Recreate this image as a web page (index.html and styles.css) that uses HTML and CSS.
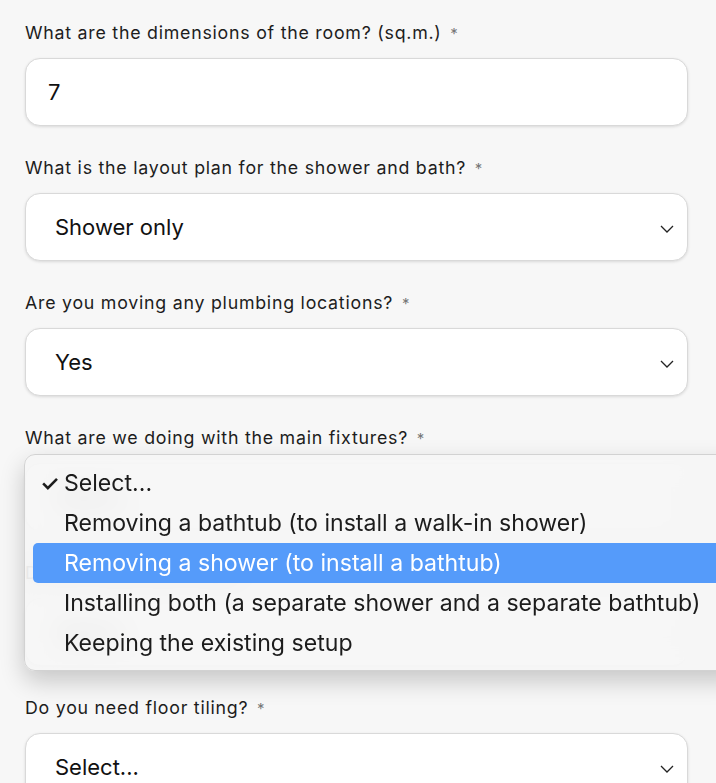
FILE: index.html
```html
<!DOCTYPE html>
<html lang="en">
<head>
<meta charset="utf-8">
<title>Bathroom form</title>
<link rel="stylesheet" href="styles.css">
</head>
<body>
<form class="form">
  <div class="field">
    <div class="label">What are the dimensions of the room? (sq.m.) <span class="req">*</span></div>
    <div class="box input"><span class="value">7</span></div>
  </div>
  <div class="field">
    <div class="label">What is the layout plan for the shower and bath? <span class="req">*</span></div>
    <div class="box select"><span class="value">Shower only</span>
      <svg class="chev" viewBox="0 0 14 8" width="14" height="8"><path d="M1 1 L7 7 L13 1" fill="none" stroke="#222" stroke-width="1.3"/></svg>
    </div>
  </div>
  <div class="field">
    <div class="label">Are you moving any plumbing locations? <span class="req">*</span></div>
    <div class="box select"><span class="value">Yes</span>
      <svg class="chev" viewBox="0 0 14 8" width="14" height="8"><path d="M1 1 L7 7 L13 1" fill="none" stroke="#222" stroke-width="1.3"/></svg>
    </div>
  </div>
  <div class="field">
    <div class="label">What are we doing with the main fixtures? <span class="req">*</span></div>
    <div class="box select"><span class="value">Select...</span>
      <svg class="chev" viewBox="0 0 14 8" width="14" height="8"><path d="M1 1 L7 7 L13 1" fill="none" stroke="#222" stroke-width="1.3"/></svg>
    </div>
  </div>
  <div class="field">
    <div class="label">Do you need wall tiling? <span class="req">*</span></div>
    <div class="box select"><span class="value">Select...</span>
      <svg class="chev" viewBox="0 0 14 8" width="14" height="8"><path d="M1 1 L7 7 L13 1" fill="none" stroke="#222" stroke-width="1.3"/></svg>
    </div>
  </div>
  <div class="field">
    <div class="label">Do you need floor tiling? <span class="req">*</span></div>
    <div class="box select"><span class="value">Select...</span>
      <svg class="chev" viewBox="0 0 14 8" width="14" height="8"><path d="M1 1 L7 7 L13 1" fill="none" stroke="#222" stroke-width="1.3"/></svg>
    </div>
  </div>
</form>
<div class="popup">
  <div class="opt"><span class="check">✓</span>Select...</div>
  <div class="opt">Removing a bathtub (to install a walk-in shower)</div>
  <div class="opt active">Removing a shower (to install a bathtub)</div>
  <div class="opt">Installing both (a separate shower and a separate bathtub)</div>
  <div class="opt">Keeping the existing setup</div>
</div>
</body>
</html>
```

FILE: styles.css
```css
html, body {
  margin: 0;
  padding: 0;
  background: #f7f7f7;
  overflow: hidden;
}
body {
  width: 716px;
  height: 783px;
  position: relative;
  font-family: Inter, "Open Sans", sans-serif;
  color: #1a1a1a;
}
.form {
  padding: 21px 28px 0 25px;
}
.field {
  margin-bottom: 30px;
}
.label {
  height: 24px;
  font-size: 17.8px;
  line-height: 24px;
  letter-spacing: 0.75px;
  margin-bottom: 13px;
  color: #1d1d1d;
  white-space: nowrap;
}
.req {
  color: #777;
  font-size: 15px;
  line-height: 1;
  margin-left: 3px;
}
.box {
  height: 68px;
  box-sizing: border-box;
  background: #fff;
  border: 1px solid #d9d9d9;
  border-radius: 15px;
  box-shadow: 0 1px 3px rgba(0,0,0,0.12);
  display: flex;
  align-items: center;
  position: relative;
}
.input {
  padding-left: 22px;
}
.select {
  padding-left: 29px;
}
.value {
  font-size: 22px;
  color: #111;
}
.chev {
  position: absolute;
  right: 13px;
  top: 31px;
}
.popup {
  position: absolute;
  left: 24px;
  top: 454px;
  width: 720px;
  box-sizing: border-box;
  padding: 8px 0 7px 8px;
  background: rgba(246,246,246,0.86);
  -webkit-backdrop-filter: blur(14px);
  backdrop-filter: blur(14px);
  border: 1px solid #d2d2d2;
  border-radius: 11px;
  box-shadow: 0 10px 24px rgba(0,0,0,0.2);
  font-family: Inter, "Liberation Sans", sans-serif;
}
.opt {
  height: 40px;
  line-height: 40px;
  font-size: 23.1px;
  color: #1c1c1c;
  padding-left: 31px;
  position: relative;
  border-radius: 5px;
  white-space: nowrap;
}
.opt.active {
  background: #559bfa;
  color: #fff;
}
.check {
  position: absolute;
  left: 7px;
  font-size: 22px;
  font-weight: 600;
}
```
